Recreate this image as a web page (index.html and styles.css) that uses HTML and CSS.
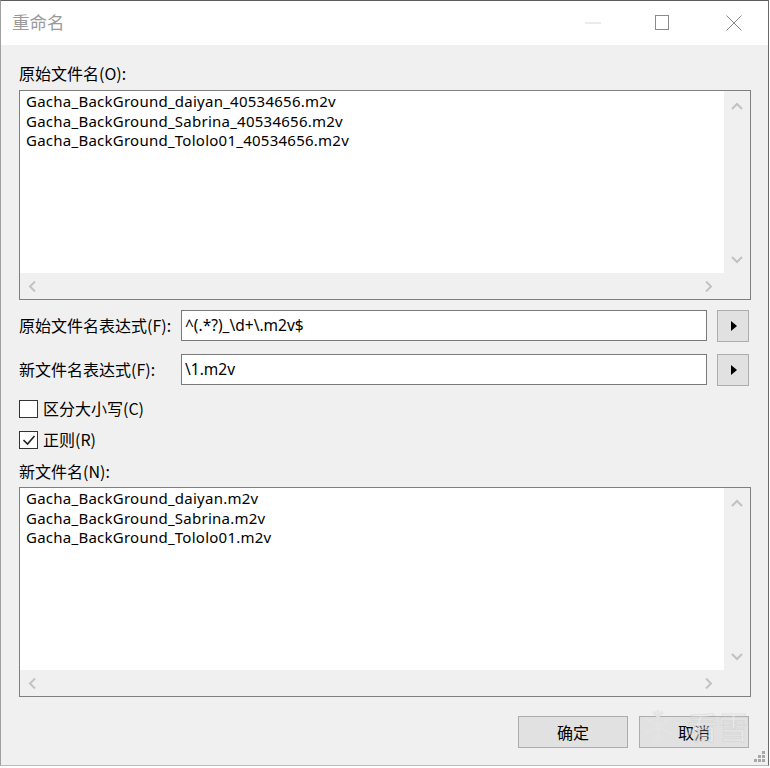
FILE: index.html
```html
<!DOCTYPE html>
<html lang="zh-CN">
<head>
<meta charset="utf-8">
<title>重命名</title>
<link rel="stylesheet" href="styles.css">
</head>
<body>
<div class="window">
  <div class="titlebar">
    <span class="title">重命名</span>
    <div class="caption">
      <span class="cap cap-min"><svg width="16" height="2" viewBox="0 0 16 2"><line x1="0" y1="1" x2="16" y2="1" stroke="#d8d8d8" stroke-width="1"/></svg></span>
      <span class="cap cap-max"><svg width="14" height="15" viewBox="0 0 14 15"><rect x="0.5" y="0.5" width="13" height="14" fill="none" stroke="#8a8a8a" stroke-width="1"/></svg></span>
      <span class="cap cap-close"><svg width="16" height="16" viewBox="0 0 16 16"><path d="M0.5 0.5 L15.5 15.5 M15.5 0.5 L0.5 15.5" stroke="#8a8a8a" stroke-width="1" fill="none"/></svg></span>
    </div>
  </div>

  <div class="content">
    <div class="label label-first">原始文件名(O):</div>
    <div class="listbox">
      <div class="list-items">
        <div class="item">Gacha_BackGround_daiyan_40534656.m2v</div>
        <div class="item">Gacha_BackGround_Sabrina_40534656.m2v</div>
        <div class="item">Gacha_BackGround_Tololo01_40534656.m2v</div>
      </div>
      <div class="vscroll">
        <svg class="chev" width="12" height="8" viewBox="0 0 12 8"><path d="M1 7 L6 2 L11 7" fill="none" stroke="#c2c2c2" stroke-width="2"/></svg>
        <svg class="chev" width="12" height="8" viewBox="0 0 12 8"><path d="M1 1 L6 6 L11 1" fill="none" stroke="#c2c2c2" stroke-width="2"/></svg>
      </div>
      <div class="hscroll">
        <svg class="chev" width="8" height="11" viewBox="0 0 8 11"><path d="M7 0.5 L2 5.5 L7 10.5" fill="none" stroke="#c2c2c2" stroke-width="2"/></svg>
        <svg class="chev" width="8" height="11" viewBox="0 0 8 11"><path d="M1 0.5 L6 5.5 L1 10.5" fill="none" stroke="#c2c2c2" stroke-width="2"/></svg>
      </div>
      <div class="corner"></div>
    </div>

    <div class="row row-first">
      <span class="row-label">原始文件名表达式(F):</span>
      <div class="input">^(.*?)_\d+\.m2v$</div>
      <span class="arrow-btn"><span class="tri"></span></span>
    </div>
    <div class="row row-second">
      <span class="row-label">新文件名表达式(F):</span>
      <div class="input">\1.m2v</div>
      <span class="arrow-btn"><span class="tri"></span></span>
    </div>

    <div class="check check-first">
      <span class="box"></span>
      <span class="check-text">区分大小写(C)</span>
    </div>
    <div class="check check-second">
      <span class="box"><svg width="16" height="16" viewBox="0 0 16 16"><path d="M2.5 8 L6.5 12 L13.5 4" fill="none" stroke="#222" stroke-width="1.6"/></svg></span>
      <span class="check-text">正则(R)</span>
    </div>

    <div class="label label-new">新文件名(N):</div>
    <div class="listbox listbox-new">
      <div class="list-items">
        <div class="item">Gacha_BackGround_daiyan.m2v</div>
        <div class="item">Gacha_BackGround_Sabrina.m2v</div>
        <div class="item">Gacha_BackGround_Tololo01.m2v</div>
      </div>
      <div class="vscroll">
        <svg class="chev" width="12" height="8" viewBox="0 0 12 8"><path d="M1 7 L6 2 L11 7" fill="none" stroke="#c2c2c2" stroke-width="2"/></svg>
        <svg class="chev" width="12" height="8" viewBox="0 0 12 8"><path d="M1 1 L6 6 L11 1" fill="none" stroke="#c2c2c2" stroke-width="2"/></svg>
      </div>
      <div class="hscroll">
        <svg class="chev" width="8" height="11" viewBox="0 0 8 11"><path d="M7 0.5 L2 5.5 L7 10.5" fill="none" stroke="#c2c2c2" stroke-width="2"/></svg>
        <svg class="chev" width="8" height="11" viewBox="0 0 8 11"><path d="M1 0.5 L6 5.5 L1 10.5" fill="none" stroke="#c2c2c2" stroke-width="2"/></svg>
      </div>
      <div class="corner"></div>
    </div>

    <div class="actions">
      <span class="btn">确定</span>
      <span class="btn">取消</span>
    </div>
  </div>

  <div class="watermark">
    <svg class="flake" width="30" height="36" viewBox="0 0 30 36">
      <g fill="none" stroke="#e4e4e4" stroke-width="3">
        <path d="M15 2 V34 M2 10 L28 26 M28 10 L2 26"/>
        <path d="M10 4 L15 8 L20 4 M10 32 L15 28 L20 32"/>
      </g>
    </svg>
    <span class="wm-text">看雪</span>
  </div>

  <div class="grip">
    <svg width="12" height="12" viewBox="0 0 12 12">
      <g fill="#a8a8a8">
        <rect x="8" y="0" width="3" height="3"/>
        <rect x="4" y="4" width="3" height="3"/><rect x="8" y="4" width="3" height="3"/>
        <rect x="0" y="8" width="3" height="3"/><rect x="4" y="8" width="3" height="3"/><rect x="8" y="8" width="3" height="3"/>
      </g>
    </svg>
  </div>
</div>
</body>
</html>
```

FILE: styles.css
```css
html, body {
  margin: 0;
  padding: 0;
  background: #ffffff;
}

.window {
  position: relative;
  width: 769px;
  height: 766px;
  box-sizing: border-box;
  border-top: 1px solid #5c5c5c;
  border-left: 1px solid #a0a0a0;
  border-right: 1px solid #6a6a6a;
  border-bottom: 1px solid #bcbcbc;
  background: #f0f0f0;
  display: flex;
  flex-direction: column;
  font-family: "Noto Sans", "Noto Sans CJK SC", sans-serif;
  color: #000;
}

.titlebar {
  height: 44px;
  background: #ffffff;
  display: flex;
  align-items: center;
  flex: none;
}

.title {
  margin-left: 11px;
  font-family: "Noto Sans CJK SC", sans-serif;
  font-size: 17.5px;
  color: #9a9a9a;
  line-height: 1;
  margin-top: -2px;
}

.caption {
  margin-left: auto;
  display: flex;
  align-items: center;
  height: 100%;
}

.cap {
  display: flex;
  align-items: center;
  justify-content: center;
  height: 100%;
}

.cap svg { display: block; }

.cap-min { width: 16px; margin-right: 54px; margin-top: -1px; }
.cap-max { width: 14px; margin-right: 57px; margin-top: -1px; }
.cap-close { width: 16px; margin-right: 26px; margin-top: -1px; }

.content {
  flex: 1;
  padding: 16px 17px 0 18px;
  display: flex;
  flex-direction: column;
}

.label {
  font-family: "Noto Sans CJK SC", sans-serif;
  font-size: 16px;
  line-height: 24px;
  height: 24px;
}

.listbox {
  margin-top: 5px;
  height: 210px;
  box-sizing: border-box;
  border: 1px solid #7f7f7f;
  display: grid;
  grid-template-columns: 1fr 26px;
  grid-template-rows: 1fr 26px;
  flex: none;
}

.list-items {
  background: #ffffff;
  padding: 1px 6px 0;
  font-family: "Noto Sans", sans-serif;
  font-size: 15px;
  letter-spacing: 0.25px;
  line-height: 19.5px;
  color: #000;
  overflow: hidden;
}

.item { white-space: nowrap; }

.vscroll {
  background: #f0f0f0;
  display: flex;
  flex-direction: column;
  justify-content: space-between;
  align-items: center;
  padding: 11px 0 9px;
}

.hscroll {
  background: #f0f0f0;
  display: flex;
  justify-content: space-between;
  align-items: center;
  padding: 0 11px 0 8px;
}

.corner { background: #f0f0f0; }

.chev { display: block; }

.row {
  display: flex;
  align-items: flex-start;
  height: 32px;
  flex: none;
}

.row-first { margin-top: 10px; }
.row-second { margin-top: 12px; }

.row-label {
  width: 162px;
  flex: none;
  font-family: "Noto Sans CJK SC", sans-serif;
  font-size: 16px;
  line-height: 31px;
}

.input {
  width: 526px;
  height: 31px;
  box-sizing: border-box;
  border: 1px solid #7a7a7a;
  background: #ffffff;
  font-family: "Noto Sans", sans-serif;
  font-size: 15.5px;
  line-height: 28px;
  padding-left: 3px;
  white-space: nowrap;
}

.arrow-btn {
  margin-left: 10px;
  width: 32px;
  height: 32px;
  box-sizing: border-box;
  border: 1px solid #adadad;
  background: #e1e1e1;
  display: flex;
  align-items: center;
  justify-content: center;
}

.tri {
  width: 0;
  height: 0;
  border-top: 5px solid transparent;
  border-bottom: 5px solid transparent;
  border-left: 6px solid #000;
  margin-left: 1px;
}

.check {
  display: flex;
  align-items: center;
  height: 18px;
  flex: none;
}

.check-first { margin-top: 14px; }
.check-second { margin-top: 13px; }

.box {
  width: 19px;
  height: 18px;
  box-sizing: border-box;
  border: 1px solid #333333;
  background: #ffffff;
  display: flex;
  align-items: center;
  justify-content: center;
  flex: none;
}

.box svg { display: block; }

.check-text {
  margin-left: 5px;
  font-family: "Noto Sans CJK SC", sans-serif;
  font-size: 16px;
  line-height: 18px;
  margin-top: -3px;
}

.label-new { margin-top: 10px; }

.listbox-new { margin-top: 4px; }

.actions {
  margin-top: 19px;
  display: flex;
  justify-content: flex-end;
  gap: 11px;
  padding-right: 2px;
}

.btn {
  width: 110px;
  height: 32px;
  box-sizing: border-box;
  border: 1px solid #adadad;
  background: #e1e1e1;
  display: flex;
  align-items: center;
  justify-content: center;
  font-family: "Noto Sans CJK SC", sans-serif;
  font-size: 16px;
}

.watermark {
  position: absolute;
  left: 642px;
  top: 705px;
  display: flex;
  align-items: center;
  gap: 14px;
  pointer-events: none;
}

.flake { display: block; opacity: 0.9; }

.wm-text {
  font-family: "Noto Sans CJK SC", sans-serif;
  font-size: 31px;
  line-height: 40px;
  color: rgba(255, 255, 255, 0.35);
  -webkit-text-stroke: 1px rgba(200, 200, 200, 0.45);
  letter-spacing: 0;
}

.grip {
  position: absolute;
  right: 2px;
  bottom: 2px;
  width: 12px;
  height: 12px;
}

.grip svg { display: block; }
```
